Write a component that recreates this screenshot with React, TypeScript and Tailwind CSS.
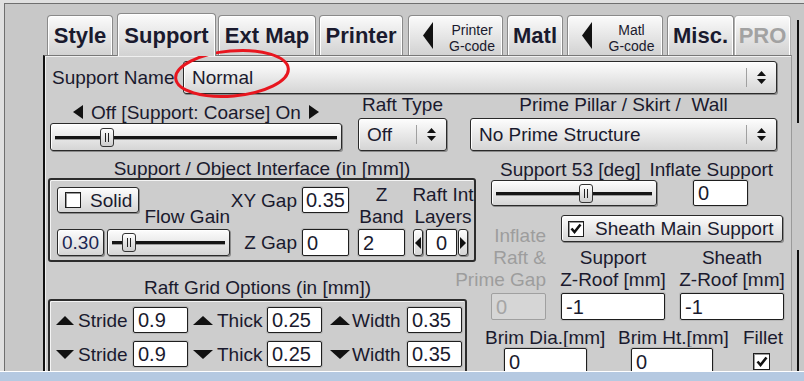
import React from 'react'

const font = "font-['Liberation_Sans',Arial,sans-serif]"
const btn =
  'rounded-[3px] border border-[#2a2a2a] bg-linear-to-b from-[#fdfdfd] to-[#d5d5d5] shadow-[inset_1px_1px_0_#fff,1px_1px_0_#8a8a8a]'
const box = 'rounded-[3px] border-2 border-[#2c2c2c] shadow-[inset_1px_1px_0_#f4f4f4]'
const tabBase =
  'flex items-center rounded-t-[4px] border border-b-0 border-[#8a8a8a] bg-linear-to-b from-[#fbfbfb] to-[#d2d2d2] shadow-[inset_1px_1px_0_#fff,inset_-1px_0_0_#fff]'

function Tri({ d, className = '' }: { d: 'l' | 'r' | 'u' | 'd'; className?: string }) {
  const pts = { l: '10,0 0,5 10,10', r: '0,0 10,5 0,10', u: '0,10 5,0 10,10', d: '0,0 10,0 5,10' }[d]
  return (
    <svg viewBox="0 0 10 10" preserveAspectRatio="none" className={`shrink-0 ${className}`}>
      <polygon points={pts} fill="#111" />
    </svg>
  )
}

function UpDown() {
  return (
    <svg width="9" height="15" viewBox="0 0 9 15" className="shrink-0">
      <polygon points="0,6 4.5,1 9,6" fill="#111" />
      <polygon points="0,9 9,9 4.5,14" fill="#111" />
    </svg>
  )
}

function Select({ text, className = '' }: { text: string; className?: string }) {
  return (
    <div className={`flex items-center ${btn} ${className}`}>
      <span className="flex-1 pl-[8px] text-[19px] leading-none whitespace-nowrap">{text}</span>
      <span className="w-px self-stretch my-[6px] bg-[#a0a0a0]" />
      <span className="w-[29px] flex justify-center">
        <UpDown />
      </span>
    </div>
  )
}

function Field({ value, className = '', disabled = false }: { value: string; className?: string; disabled?: boolean }) {
  return (
    <div
      className={`shrink-0 flex items-center rounded-[2px] border text-[20px] leading-none ${
        disabled
          ? 'bg-[#d6d6d6] border-[#a0a0a0] text-[#a5a5a5]'
          : 'bg-white border-[#1e1e1e] shadow-[0_0_0_1px_#b8b8b8]'
      } ${className}`}
    >
      {value}
    </div>
  )
}

function Slider({ lead, className = '' }: { lead: string; className?: string }) {
  return (
    <div className={`flex items-center px-[4px] ${btn} ${className}`}>
      <div className={`h-[3px] bg-[#151515] shadow-[0_1px_0_#9a9a9a] ${lead}`} />
      <div className="w-[14px] h-[19px] shrink-0 flex items-center justify-center rounded-[3px] border border-[#333] bg-linear-to-b from-white to-[#cdcdcd]">
        <div className="w-[4px] h-[9px] border-x-[1.5px] border-[#222]" />
      </div>
      <div className="flex-1 h-[3px] bg-[#151515] shadow-[0_1px_0_#9a9a9a]" />
    </div>
  )
}

function Check({ on = false, className = '' }: { on?: boolean; className?: string }) {
  return (
    <div
      className={`w-[16px] h-[16px] shrink-0 border border-[#1e1e1e] bg-white shadow-[inset_1px_1px_0_#9a9a9a] flex items-center justify-center ${className}`}
    >
      {on && (
        <svg width="12" height="11" viewBox="0 0 12 11">
          <path d="M1.5 5.5 L4.5 9 L10.5 1.5" fill="none" stroke="#111" strokeWidth="2.6" />
        </svg>
      )}
    </div>
  )
}

function Tab({ children, className = '' }: { children: React.ReactNode; className?: string }) {
  return <div className={`${tabBase} justify-center h-[40px] ${className}`}>{children}</div>
}

function CodeTab({ top, className = '' }: { top: string; className?: string }) {
  return (
    <div className={`${tabBase} h-[40px] ${className}`}>
      <Tri d="l" className="ml-[14px] w-[10px] h-[27px]" />
      <div className="flex-1 flex flex-col items-center pl-[9px] pt-[4px] text-[14px] leading-[16px] font-normal">
        <span>{top}</span>
        <span>G-code</span>
      </div>
    </div>
  )
}

function GridRow({ dir, stride, thick, width, className = '' }: { dir: 'u' | 'd'; stride: string; thick: string; width: string; className?: string }) {
  return (
    <div className={`flex items-center h-[26px] pl-[6px] text-[19px] leading-none ${className}`}>
      <Tri d={dir} className="w-[18px] h-[9px]" />
      <span className="ml-[4px] w-[50px]">Stride</span>
      <Field value={stride} className="ml-[5px] w-[55px] h-full pl-[4px]" />
      <Tri d={dir} className="ml-[5px] w-[20px] h-[9px]" />
      <span className="ml-[4px] w-[45px]">Thick</span>
      <Field value={thick} className="ml-[5px] w-[55px] h-full pl-[4px]" />
      <Tri d={dir} className="ml-[8px] w-[20px] h-[9px]" />
      <span className="ml-[2px] w-[50px]">Width</span>
      <Field value={width} className="ml-[5px] w-[55px] h-full pl-[4px]" />
    </div>
  )
}

export default function App() {
  return (
    <div className={`relative w-[804px] h-[381px] overflow-hidden flex flex-col bg-[#e0e0e0] text-[#1a1a2e] ${font}`}>
      <div className="h-[3px] shrink-0" />
      <div className="flex-1 min-h-0 flex ml-[4px] border-t border-l border-[#6f6f6f] bg-[#c8c8c8]">
        <div className="w-[788px] flex flex-col">
          {/* tabs */}
          <div className="h-[51px] shrink-0 flex items-end pl-[42px] text-[22px] font-bold">
            <Tab className="w-[66px]">Style</Tab>
            <div className={`${tabBase} relative z-10 justify-center ml-[4px] w-[99px] h-[43px] mb-[-1px] to-[#cdcdcd]`}>
              Support
            </div>
            <Tab className="ml-[2px] w-[98px]">Ext Map</Tab>
            <Tab className="ml-[3px] w-[84px]">Printer</Tab>
            <CodeTab top="Printer" className="ml-[5px] w-[95px]" />
            <Tab className="ml-[4px] w-[56px]">Matl</Tab>
            <CodeTab top="Matl" className="ml-[4px] w-[96px]" />
            <Tab className="ml-[4px] w-[67px]">Misc.</Tab>
            <Tab className="w-[57px] text-[#a2a2a2] border-[#b0b0b0]">PRO</Tab>
          </div>

          {/* panel */}
          <div className="flex-1 min-h-0 ml-[38px] w-[749px] border-l-2 border-l-[#111] border-t border-t-[#777] border-r border-r-[#9a9a9a] bg-[#cdcdcd] shadow-[inset_1px_1px_0_#f0f0f0] overflow-hidden">
            <div className="flex items-center mt-[5px] h-[33px]">
              <span className="ml-[7px] w-[131px] text-[19px] leading-none whitespace-nowrap">Support Name</span>
              <Select text="Normal" className="w-[594px] h-full" />
            </div>

            <div className="flex items-end h-[57px]">
              <div className="ml-[5px] w-[292px] flex flex-col">
                <div className="h-[20px] flex items-center justify-center gap-[8px] text-[19px] leading-none">
                  <Tri d="l" className="w-[10px] h-[14px]" />
                  <span className="whitespace-nowrap">Off [Support: Coarse] On</span>
                  <Tri d="r" className="w-[10px] h-[14px]" />
                </div>
                <Slider lead="w-[45px]" className="mt-[1px] h-[28px]" />
              </div>
              <div className="ml-[16px] w-[89px] flex flex-col">
                <div className="h-[20px] text-center text-[19px] leading-[20px] whitespace-nowrap">Raft Type</div>
                <Select text="Off" className="mt-[3px] h-[33px]" />
              </div>
              <div className="ml-[23px] w-[307px] flex flex-col">
                <div className="h-[20px] text-center text-[19px] leading-[20px] whitespace-pre">Prime Pillar / Skirt /  Wall</div>
                <Select text="No Prime Structure" className="mt-[3px] h-[33px]" />
              </div>
            </div>

            <div className="flex">
              {/* left column */}
              <div className="ml-[3px] w-[428px] flex flex-col">
                <div className="mt-[9px] h-[18px] text-center text-[19px] leading-[18px] whitespace-nowrap">
                  Support / Object Interface (in [mm])
                </div>
                <div className={`h-[84px] flex pl-[7px] ${box}`}>
                  <div className="w-[173px] flex flex-col pt-[7px]">
                    <div className={`w-[82px] h-[26px] flex items-center ${btn}`}>
                      <Check className="ml-[7px]" />
                      <span className="ml-[9px] text-[19px] leading-none">Solid</span>
                    </div>
                    <div className="-mt-[4px] h-[16px] flex justify-end text-[19px] leading-[16px] whitespace-nowrap">Flow Gain</div>
                    <div className="mt-[4px] h-[27px] flex">
                      <div className={`w-[47px] flex items-center justify-center text-[19px] leading-none text-[#1c2552] ${btn}`}>0.30</div>
                      <Slider lead="w-[10px]" className="ml-[3px] w-[123px]" />
                    </div>
                  </div>
                  <div className="w-[119px] flex flex-col pt-[7px] text-[19px] leading-none">
                    <div className="h-[26px] flex items-center justify-end whitespace-nowrap">
                      <span>XY Gap</span>
                      <Field value="0.35" className="ml-[5px] w-[47px] h-full pl-[3px]" />
                    </div>
                    <div className="mt-[16px] h-[27px] flex items-center justify-end whitespace-nowrap">
                      <span>Z Gap</span>
                      <Field value="0" className="ml-[5px] w-[47px] h-full pl-[4px]" />
                    </div>
                  </div>
                  <div className="ml-[9px] w-[47px] flex flex-col items-center text-[19px] leading-[22px]">
                    <span className="mt-[4px]">Z</span>
                    <span>Band</span>
                    <Field value="2" className="mt-[1px] w-[47px] h-[27px] pl-[4px]" />
                  </div>
                  <div className="ml-[7px] w-[62px] flex flex-col items-center text-[19px] leading-[22px]">
                    <span className="mt-[4px] whitespace-nowrap">Raft Int</span>
                    <span>Layers</span>
                    <div className="mt-[1px] h-[27px] flex self-start ml-[1px]">
                      <div className={`w-[10px] flex items-center justify-center ${btn}`}>
                        <Tri d="l" className="w-[6px] h-[12px]" />
                      </div>
                      <Field value="0" className="ml-[3px] w-[31px] justify-center" />
                      <div className={`ml-[1px] w-[10px] flex items-center justify-center ${btn}`}>
                        <Tri d="r" className="w-[6px] h-[12px]" />
                      </div>
                    </div>
                  </div>
                </div>

                <div className="mt-[17px] w-[419px] h-[18px] text-center text-[19px] leading-[18px] whitespace-nowrap">
                  Raft Grid Options (in [mm])
                </div>
                <div className={`mt-[2px] w-[419px] h-[90px] pt-[6px] ${box}`}>
                  <GridRow dir="u" stride="0.9" thick="0.25" width="0.35" />
                  <GridRow dir="d" stride="0.9" thick="0.25" width="0.35" className="mt-[8px]" />
                </div>
              </div>

              {/* right column */}
              <div className="w-[316px] flex flex-col">
                <div className="mt-[10px] h-[18px] flex pl-[24px] text-[19px] leading-[18px] whitespace-nowrap">
                  <span>Support 53 [deg]</span>
                  <span className="ml-[9px]">Inflate Support</span>
                </div>
                <div className="mt-[1px] h-[26px] flex">
                  <Slider lead="w-[83px]" className="ml-[15px] w-[166px] h-full" />
                  <Field value="0" className="ml-[36px] w-[55px] h-full pl-[4px]" />
                </div>
                <div className="flex">
                  <div className="w-[70px] flex flex-col pt-[19px] text-[19px] leading-[22px]">
                    <div className="flex justify-end text-[#9d9d9d]"><span className="whitespace-nowrap">Inflate</span></div>
                    <div className="flex justify-end text-[#9d9d9d]"><span className="whitespace-nowrap">Raft &amp;</span></div>
                    <div className="flex justify-end text-[#9d9d9d]"><span className="whitespace-nowrap">Prime Gap</span></div>
                    <Field disabled value="0" className="mt-[2px] ml-[15px] w-[55px] h-[27px] pl-[4px]" />
                  </div>
                  <div className="ml-[13px] w-[227px] flex flex-col">
                    <div className={`mt-[9px] ml-[2px] w-[222px] h-[27px] flex items-center ${btn}`}>
                      <Check on className="ml-[6px]" />
                      <span className="ml-[11px] text-[19px] leading-none whitespace-nowrap">Sheath Main Support</span>
                    </div>
                    <div className="mt-[5px] flex gap-[11px] text-[19px] leading-[22px]">
                      <div className="w-[108px] flex flex-col items-center whitespace-nowrap">
                        <span>Support</span>
                        <span>Z-Roof [mm]</span>
                        <Field value="-1" className="mt-[2px] w-[104px] h-[27px] pl-[4px]" />
                      </div>
                      <div className="w-[108px] flex flex-col items-center whitespace-nowrap">
                        <span>Sheath</span>
                        <span>Z-Roof [mm]</span>
                        <Field value="-1" className="mt-[2px] w-[104px] h-[27px] pl-[4px]" />
                      </div>
                    </div>
                  </div>
                </div>
                <div className="mt-[9px] ml-[9px] flex text-[19px] leading-[18px] whitespace-nowrap">
                  <div className="w-[122px] flex flex-col">
                    <span>Brim Dia.[mm]</span>
                    <Field value="0" className="mt-[1px] ml-[19px] w-[83px] h-[27px] pl-[4px]" />
                  </div>
                  <div className="ml-[11px] w-[109px] flex flex-col">
                    <span>Brim Ht.[mm]</span>
                    <Field value="0" className="mt-[1px] ml-[13px] w-[82px] h-[27px] pl-[4px]" />
                  </div>
                  <div className="ml-[16px] w-[42px] flex flex-col">
                    <span>Fillet</span>
                    <Check on className="mt-[6px] ml-[10px] w-[17px] h-[17px]" />
                  </div>
                </div>
              </div>
            </div>
          </div>
        </div>

        {/* right window edge */}
        <div className="flex-1 flex flex-col pl-[4px]">
          <div className="mt-[16px] h-[103px] w-[2px] bg-[#111]" />
          <div className="mt-[127px] h-[121px] w-[2px] bg-[#111]" />
        </div>
      </div>
      <div className="h-px shrink-0 bg-white" />
      <div className="h-[9px] shrink-0 bg-[#b5c9e1]" />

      {/* hand-drawn annotation */}
      <svg className="absolute left-[171px] top-[46px] w-[122px] h-[55px] pointer-events-none" viewBox="0 0 122 55">
        <ellipse cx="61" cy="27.5" rx="56.5" ry="22.5" transform="rotate(-5 61 27.5)" fill="none" stroke="#e8161f" strokeWidth="3" />
      </svg>
    </div>
  )
}
